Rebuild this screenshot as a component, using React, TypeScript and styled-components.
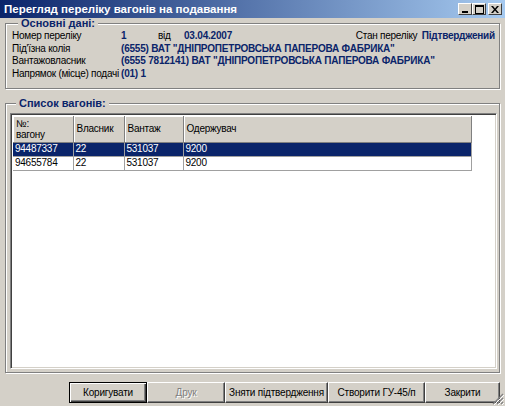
import React from "react";
import styled, { createGlobalStyle } from "styled-components";

const GlobalStyle = createGlobalStyle`
  html, body { margin: 0; padding: 0; background: #d4d0c8; }
  body { font-family: "Liberation Sans", Arial, sans-serif; }
`;

const wagons = [
  { number: "94487337", owner: "22", cargo: "531037", receiver: "9200" },
  { number: "94655784", owner: "22", cargo: "531037", receiver: "9200" },
];

function App() {
  const selected = 0;
  return (
    <Window>
      <GlobalStyle />
      <TitleBar>
        <Title>Перегляд переліку вагонів на подавання</Title>
        <Caption>
          <CaptionButton>
            <svg width="8" height="7" viewBox="0 0 8 7">
              <rect x="1" y="5" width="6" height="2" fill="#000" />
            </svg>
          </CaptionButton>
          <CaptionButton>
            <svg width="9" height="9" viewBox="0 0 9 9">
              <rect x="0.5" y="0.5" width="8" height="8" fill="none" stroke="#000" />
              <rect x="0" y="0" width="9" height="2" fill="#000" />
            </svg>
          </CaptionButton>
          <CaptionButton $close>
            <svg width="8" height="7" viewBox="0 0 8 7">
              <path d="M0 0h2l2 2.5L6 0h2L5 3.5 8 7H6L4 4.5 2 7H0l3-3.5z" fill="#000" />
            </svg>
          </CaptionButton>
        </Caption>
      </TitleBar>

      <Body>
        <InfoGroup>
          <Legend>Основні дані:</Legend>
          <InfoRow>
            <Label>Номер переліку</Label>
            <Value $width={37}>1</Value>
            <Plain $width={26}>від</Plain>
            <Value>03.04.2007</Value>
            <Spacer />
            <Plain $width={66}>Стан переліку</Plain>
            <Value>Підтверджений</Value>
          </InfoRow>
          <InfoRow>
            <Label>Під'їзна колія</Label>
            <Value>(6555) ВАТ "ДНІПРОПЕТРОВСЬКА ПАПЕРОВА ФАБРИКА"</Value>
          </InfoRow>
          <InfoRow>
            <Label>Вантажовласник</Label>
            <Value>(6555 7812141) ВАТ "ДНІПРОПЕТРОВСЬКА ПАПЕРОВА ФАБРИКА"</Value>
          </InfoRow>
          <InfoRow>
            <Label>Напрямок (місце) подачі</Label>
            <Value>(01) 1</Value>
          </InfoRow>
        </InfoGroup>

        <ListGroup>
          <Legend>Список вагонів:</Legend>
          <ListBox>
            <Grid>
              <colgroup>
                <col style={{ width: 60 }} />
                <col style={{ width: 51 }} />
                <col style={{ width: 59 }} />
                <col style={{ width: 288 }} />
              </colgroup>
              <thead>
                <tr>
                  <HeadCell>
                    №:
                    <br />
                    вагону
                  </HeadCell>
                  <HeadCell>Власник</HeadCell>
                  <HeadCell>Вантаж</HeadCell>
                  <HeadCell>Одержувач</HeadCell>
                </tr>
              </thead>
              <tbody>
                {wagons.map((w, i) => (
                  <Row key={w.number} $selected={i === selected}>
                    <Cell>{w.number}</Cell>
                    <Cell>{w.owner}</Cell>
                    <Cell>{w.cargo}</Cell>
                    <Cell>{w.receiver}</Cell>
                  </Row>
                ))}
              </tbody>
            </Grid>
          </ListBox>
        </ListGroup>

        <ButtonBar>
          <Button $width={78} $default>Коригувати</Button>
          <Button $width={78} disabled>Друк</Button>
          <Button $width={103}>Зняти підтвердження</Button>
          <Button $width={97}>Створити ГУ-45/п</Button>
          <Button $width={75}>Закрити</Button>
        </ButtonBar>
        <Grip width="12" height="12" viewBox="0 0 12 12">
          <path d="M11 1L1 11M11 5L5 11M11 9L9 11" stroke="#808080" strokeWidth="1.2" />
          <path d="M12 2L2 12M12 6L6 12M12 10L10 12" stroke="#fff" strokeWidth="1" />
        </Grip>
      </Body>
    </Window>
  );
}

export default App;

const Window = styled.div`
  position: relative;
  width: 505px;
  height: 406px;
  display: flex;
  flex-direction: column;
  background: #d4d0c8;
  font-size: 10px;
  letter-spacing: -0.25px;
  color: #000;
  overflow: hidden;
`;

const TitleBar = styled.div`
  height: 18px;
  flex: none;
  display: flex;
  align-items: center;
  padding: 0 3px 0 4px;
  background: linear-gradient(to right, #0a246a, #a6caf0);
`;

const Title = styled.div`
  flex: 1;
  color: #fff;
  font-weight: bold;
  font-size: 11.5px;
  letter-spacing: 0;
`;

const Caption = styled.div`
  display: flex;
`;

const CaptionButton = styled.div<{ $close?: boolean }>`
  width: 14px;
  height: 12px;
  margin-left: ${(p) => (p.$close ? "2px" : "0")};
  display: flex;
  align-items: center;
  justify-content: center;
  background: #d4d0c8;
  box-sizing: border-box;
  border: 1px solid;
  border-color: #fff #404040 #404040 #fff;
`;

const Body = styled.div`
  flex: 1;
  display: flex;
  flex-direction: column;
  padding: 0 5px 3px 5px;
`;

const GroupBox = styled.fieldset`
  margin: 0;
  padding: 0;
  min-width: 0;
  border: 1px solid #808080;
  box-shadow: 1px 1px 0 #fff, inset 1px 1px 0 #fff;
`;

const InfoGroup = styled(GroupBox)`
  height: 71px;
  box-sizing: border-box;
  padding: 0 4px 0 6px;
`;

const ListGroup = styled(GroupBox)`
  flex: 1;
  display: flex;
  flex-direction: column;
  margin-top: 9px;
  padding: 4px 2px 3px 4px;
`;

const Legend = styled.legend`
  margin-left: 6px;
  padding: 0 3px;
  font-size: 11px;
  font-weight: bold;
  letter-spacing: 0;
  color: #0a246a;
  line-height: 11px;
  background: #d4d0c8;
`;

const InfoRow = styled.div`
  display: flex;
  align-items: baseline;
  height: 12.7px;
  line-height: 13px;
  white-space: nowrap;
`;

const Label = styled.span`
  width: 109px;
  flex: none;
`;

const Plain = styled.span<{ $width?: number }>`
  width: ${(p) => (p.$width ? `${p.$width}px` : "auto")};
  flex: none;
`;

const Value = styled.span<{ $width?: number }>`
  width: ${(p) => (p.$width ? `${p.$width}px` : "auto")};
  flex: none;
  font-weight: bold;
  letter-spacing: -0.2px;
  color: #0a246a;
`;

const Spacer = styled.span`
  flex: 1;
`;

const ListBox = styled.div`
  flex: 1;
  background: #fff;
  border: 1px solid;
  border-color: #808080 #fff #fff #808080;
  box-shadow: inset 1px 1px 0 #404040, inset -1px -1px 0 #d4d0c8;
  padding: 2px;
`;

const Grid = styled.table`
  border-collapse: collapse;
  table-layout: fixed;
  width: 458px;
`;

const HeadCell = styled.th`
  height: 26px;
  padding: 0 3px;
  box-sizing: border-box;
  text-align: left;
  vertical-align: middle;
  font-weight: normal;
  font-size: 10px;
  line-height: 11px;
  background: #d4d0c8;
  border-right: 1px solid #808080;
  border-bottom: 1px solid #808080;
  box-shadow: inset 1px 1px 0 #fff;
`;

const Row = styled.tr<{ $selected?: boolean }>`
  background: ${(p) => (p.$selected ? "#0a246a" : "#fff")};
  color: ${(p) => (p.$selected ? "#fff" : "#000")};
`;

const Cell = styled.td`
  height: 13px;
  padding: 0 2px;
  line-height: 12px;
  border-right: 1px solid #a0a0a0;
  border-bottom: 1px solid #a0a0a0;
  white-space: nowrap;
`;

const ButtonBar = styled.div`
  display: flex;
  justify-content: flex-end;
  margin-top: 9px;
  height: 21px;
`;

const Button = styled.button<{ $width: number; $default?: boolean }>`
  width: ${(p) => p.$width}px;
  height: 21px;
  margin: 0;
  padding: 0;
  font-family: "Liberation Sans", Arial, sans-serif;
  font-size: 10px;
  letter-spacing: -0.2px;
  color: #000;
  background: #d4d0c8;
  box-sizing: border-box;
  border: 1px solid;
  border-color: ${(p) => (p.$default ? "#000" : "#fff #404040 #404040 #fff")};
  box-shadow: ${(p) =>
    p.$default
      ? "inset 1px 1px 0 #fff, inset -1px -1px 0 #404040, inset -2px -2px 0 #808080"
      : "inset -1px -1px 0 #808080"};
  &:disabled {
    color: #808080;
    text-shadow: 1px 1px 0 #fff;
  }
`;

const Grip = styled.svg`
  position: absolute;
  right: 1px;
  bottom: 1px;
`;
